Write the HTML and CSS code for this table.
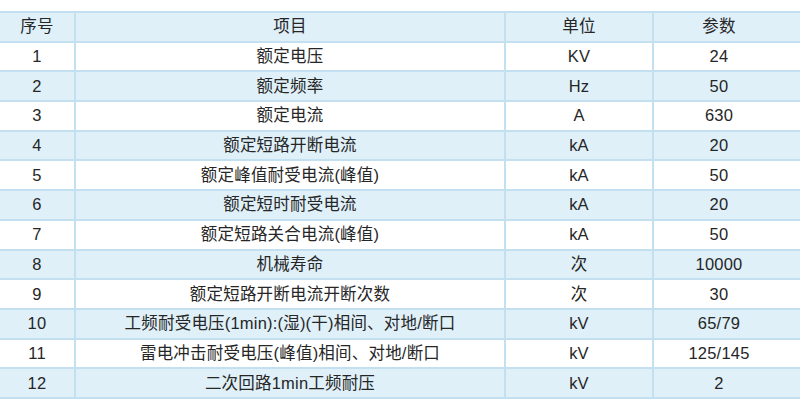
FILE: index.html
```html
<!DOCTYPE html>
<html lang="zh-CN">
<head>
<meta charset="utf-8">
<link rel="stylesheet" href="styles.css">
</head>
<body>
<table class="spec">
  <colgroup>
    <col class="c-no"><col class="c-item"><col class="c-unit"><col class="c-val">
  </colgroup>
  <thead>
    <tr><th>序号</th><th>项目</th><th>单位</th><th>参数</th></tr>
  </thead>
  <tbody>
    <tr><td>1</td><td>额定电压</td><td>KV</td><td>24</td></tr>
    <tr><td>2</td><td>额定频率</td><td>Hz</td><td>50</td></tr>
    <tr><td>3</td><td>额定电流</td><td>A</td><td>630</td></tr>
    <tr><td>4</td><td>额定短路开断电流</td><td>kA</td><td>20</td></tr>
    <tr><td>5</td><td>额定峰值耐受电流(峰值)</td><td>kA</td><td>50</td></tr>
    <tr><td>6</td><td>额定短时耐受电流</td><td>kA</td><td>20</td></tr>
    <tr><td>7</td><td>额定短路关合电流(峰值)</td><td>kA</td><td>50</td></tr>
    <tr><td>8</td><td>机械寿命</td><td>次</td><td>10000</td></tr>
    <tr><td>9</td><td>额定短路开断电流开断次数</td><td>次</td><td>30</td></tr>
    <tr><td>10</td><td>工频耐受电压(1min):(湿)(干)相间、对地/断口</td><td>kV</td><td>65/79</td></tr>
    <tr><td>11</td><td>雷电冲击耐受电压(峰值)相间、对地/断口</td><td>kV</td><td>125/145</td></tr>
    <tr><td>12</td><td>二次回路1min工频耐压</td><td>kV</td><td>2</td></tr>
  </tbody>
</table>
</body>
</html>
```
FILE: styles.css
```css
html, body {
  margin: 0;
  padding: 0;
  background: #ffffff;
}
body {
  padding-top: 11px;
  font-family: "Liberation Sans", "Noto Sans CJK SC", sans-serif;
  color: #262626;
}
.spec {
  width: 800px;
  table-layout: fixed;
  border-collapse: separate;
  border-spacing: 0;
  border-top: 2px solid #c2e0f0;
}
.c-no { width: 76px; }
.c-item { width: 430px; }
.c-unit { width: 148px; }
.c-val { width: 146px; }
.spec th, .spec td {
  height: 29.7px;
  padding: 0;
  text-align: center;
  vertical-align: middle;
  font-size: 16.5px;
  font-weight: normal;
  letter-spacing: 0.2px;
  line-height: 19px;
  border-bottom: 2px solid #c2e0f0;
  border-right: 2px solid #c2e0f0;
  box-sizing: border-box;
}
.spec th:last-child, .spec td:last-child {
  border-right: none;
  padding-right: 16px;
}
.spec thead tr, .spec tbody tr:nth-child(even) {
  background: #dff0f9;
}
.spec tbody tr:nth-child(odd) {
  background: #ffffff;
}
```
